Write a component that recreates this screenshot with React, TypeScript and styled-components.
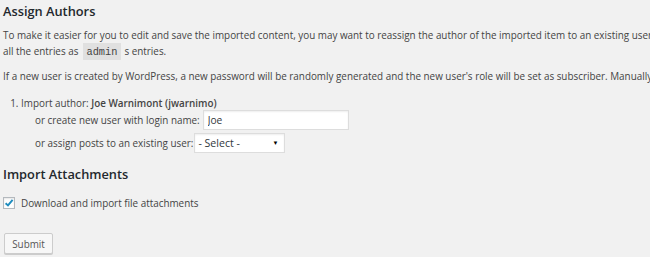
import React from 'react';
import styled, { createGlobalStyle } from 'styled-components';

const GlobalStyle = createGlobalStyle`
  html, body {
    margin: 0;
    padding: 0;
    background: #f1f1f1;
    overflow: hidden;
  }
  body {
    width: 650px;
    height: 257px;
  }
`;

const Page = styled.div`
  width: 1100px;
  padding: 2px 0 0 3px;
  font-family: 'Open Sans', 'Liberation Sans', sans-serif;
  font-size: 9.9px;
  line-height: 16px;
  color: #444;
`;

const Heading = styled.h3<{ $top?: number }>`
  margin: ${(p) => p.$top ?? 0}px 0 0;
  font-size: 12.8px;
  line-height: 18px;
  font-weight: 600;
  color: #23282d;
`;

const Para = styled.p<{ $top: number }>`
  margin: ${(p) => p.$top}px 0 0;
  white-space: nowrap;
`;

const Code = styled.code`
  font-family: 'Liberation Mono', 'DejaVu Sans Mono', monospace;
  font-size: 10.3px;
  padding: 3px 3.5px 2px;
  margin: 0 1px 0 2px;
  background: rgba(0, 0, 0, 0.07);
`;

const AuthorList = styled.ol`
  margin: 11px 0 0;
  padding: 0 0 0 18px;
`;

const AuthorItem = styled.li`
  strong {
    font-weight: 600;
  }
`;

const FieldRow = styled.div<{ $top: number }>`
  display: flex;
  align-items: center;
  height: 20px;
  margin: ${(p) => p.$top}px 0 0 14px;
  white-space: nowrap;
`;

const TextInput = styled.input`
  box-sizing: border-box;
  width: 146px;
  height: 20px;
  margin-left: 3px;
  padding: 0 4px;
  border: 1px solid #ddd;
  box-shadow: inset 0 1px 2px rgba(0, 0, 0, 0.07);
  background: #fff;
  font-family: 'Open Sans', 'Liberation Sans', sans-serif;
  font-size: 10.2px;
  color: #32373c;
  outline: none;
`;

const SelectBox = styled.div`
  position: relative;
  box-sizing: border-box;
  width: 91px;
  height: 20px;
  margin-left: 1px;
  border: 1px solid #ddd;
  box-shadow: inset 0 1px 2px rgba(0, 0, 0, 0.07);
  background: #fff;
  display: flex;
  align-items: center;
  padding-left: 3px;
  font-size: 10.6px;
  color: #32373c;
`;

const Arrow = styled.span`
  position: absolute;
  right: 6px;
  top: 50%;
  transform: translateY(-50%);
  font-size: 6px;
  color: #000;
`;

const CheckRow = styled.label`
  display: flex;
  align-items: center;
  gap: 6px;
  margin-top: 12px;
`;

const CheckBox = styled.span`
  box-sizing: border-box;
  width: 12px;
  height: 12px;
  border: 1px solid #b4b9be;
  background: #fff;
  box-shadow: inset 0 1px 2px rgba(0, 0, 0, 0.1);
  display: flex;
  align-items: center;
  justify-content: center;
`;

const SubmitButton = styled.button`
  display: block;
  box-sizing: border-box;
  margin: 22px 0 0 1px;
  width: 49px;
  height: 21px;
  padding: 0;
  border: 1px solid #ccc;
  border-radius: 2px;
  background: #f7f7f7;
  box-shadow: 0 1px 0 #ccc;
  font-family: 'Open Sans', 'Liberation Sans', sans-serif;
  font-size: 9.9px;
  color: #555;
`;

export default function App() {
  return (
    <>
      <GlobalStyle />
      <Page>
        <Heading>Assign Authors</Heading>
        <Para $top={7}>
          To make it easier for you to edit and save the imported content, you may want to reassign the author of the
          imported item to an existing user of this site. For example, you may want to import
          <br />
          all the entries as <Code>admin</Code> s entries.
        </Para>
        <Para $top={8}>
          If a new user is created by WordPress, a new password will be randomly generated and the new user's role will
          be set as subscriber. Manually changing the new user's details will be necessary.
        </Para>
        <AuthorList>
          <AuthorItem>
            Import author: <strong>Joe Warnimont (jwarnimo)</strong>
            <FieldRow $top={-1}>
              or create new user with login name:
              <TextInput defaultValue="Joe" />
            </FieldRow>
            <FieldRow $top={3}>
              or assign posts to an existing user:
              <SelectBox>
                - Select -<Arrow>▼</Arrow>
              </SelectBox>
            </FieldRow>
          </AuthorItem>
        </AuthorList>
        <Heading $top={12}>Import Attachments</Heading>
        <CheckRow>
          <CheckBox>
            <svg width="10" height="10" viewBox="0 0 10 10">
              <path d="M1.6 5.2 L4 7.4 L8.6 1.8" fill="none" stroke="#1e8cbe" strokeWidth="1.9" />
            </svg>
          </CheckBox>
          Download and import file attachments
        </CheckRow>
        <SubmitButton>Submit</SubmitButton>
      </Page>
    </>
  );
}
